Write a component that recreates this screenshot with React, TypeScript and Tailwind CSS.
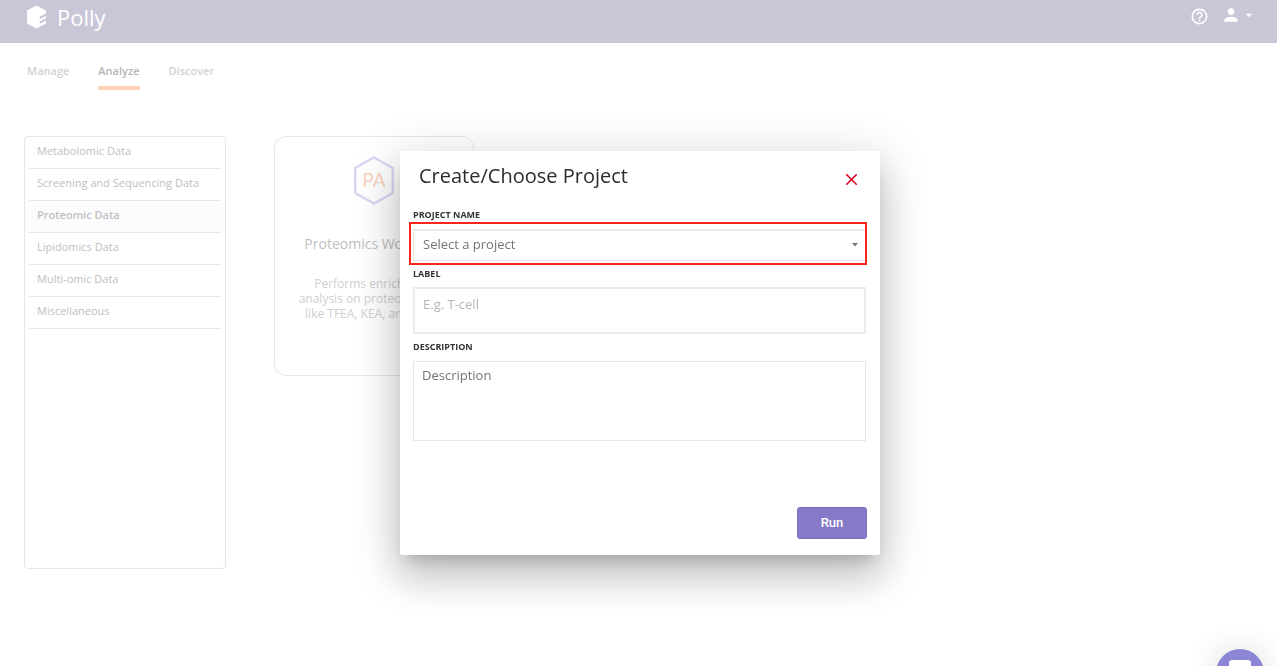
import { X } from 'lucide-react';
import { MdHelpOutline, MdPerson, MdArrowDropDown } from 'react-icons/md';

const tabs = ['Manage', 'Analyze', 'Discover'];

const categories = [
  'Metabolomic Data',
  'Screening and Sequencing Data',
  'Proteomic Data',
  'Lipidomics Data',
  'Multi-omic Data',
  'Miscellaneous',
];

function Logo() {
  return (
    <svg className="h-6 w-5" viewBox="0 0 20 24" aria-hidden="true">
      <path
        d="M9.500 .5 19 5.400V8.400L12.800 11.600V14L19 10.900V13.200L12.800 16.400V18.700L19 15.500V18.600L9.500 23.500 0 18.600V5.400Z"
        fill="#fff"
      />
    </svg>
  );
}

function Header() {
  return (
    <header className="flex h-[43px] items-start justify-between bg-[#c9c6d7] pr-5 pl-[27px] text-white">
      <a href="#home" className="flex items-start gap-2.5 pt-[5px] text-[22px] leading-6 font-medium">
        <Logo />
        Polly
      </a>
      <div className="flex items-start gap-3 pt-[5px]">
        <button type="button" aria-label="Help" className="pt-0.5">
          <MdHelpOutline size={19} />
        </button>
        <button type="button" aria-label="Account" className="flex items-center">
          <MdPerson size={20} />
          <MdArrowDropDown size={16} />
        </button>
      </div>
    </header>
  );
}

function Tabs() {
  return (
    <nav className="flex gap-[29px] px-[27px] pt-5 text-[11px] leading-4 font-semibold">
      {tabs.map((tab) => (
        <a
          key={tab}
          href={`#${tab.toLowerCase()}`}
          className={
            tab === 'Analyze'
              ? 'border-b-4 border-[#fdd0b8] pb-[7px] text-[#b4b4b4]'
              : 'border-b-4 border-transparent pb-[7px] text-[#d2d2d2]'
          }
        >
          {tab}
        </a>
      ))}
    </nav>
  );
}

function Sidebar() {
  return (
    <aside className="min-h-[433px] w-[202px] shrink-0 rounded border border-[#e6e6e6] text-[11px] text-[#c0c0c0]">
      <ul>
        {categories.map((name) => (
          <li key={name} className={name === 'Proteomic Data' ? 'bg-[#fcfcff] px-1 font-semibold' : 'px-1'}>
            <a href="#category" className="flex h-8 items-center border-b border-[#e6e6e6] px-2 pb-0.5">
              {name}
            </a>
          </li>
        ))}
      </ul>
    </aside>
  );
}

function WorkflowCard() {
  return (
    <article className="flex h-60 w-[200px] flex-col items-center rounded-xl border border-[#e6e6e6] px-4 pt-[18px] text-center">
      <svg className="h-[52px] w-11" viewBox="0 0 44 52" aria-hidden="true">
        <path d="M22 2.500 40.800 13V38L22 48.500 3.200 38V13Z" fill="none" stroke="#dbd8f3" strokeWidth="2.500" />
        <text x="22" y="32" textAnchor="middle" fontFamily="Lato" fontSize="19" fill="#fad2bf">
          PA
        </text>
      </svg>
      <h2 className="mt-[27px] text-sm leading-5 whitespace-nowrap text-[#bfbfbf]">Proteomics Workflow</h2>
      <p className="mt-[22px] text-xs leading-[15px] text-[#d0d0d0]">
        Performs enrichment
        <br />
        analysis on proteomic data
        <br />
        like TFEA, KEA, and more
      </p>
    </article>
  );
}

function ProjectDialog() {
  return (
    <div className="fixed inset-0 flex items-start justify-center pt-[151px] pl-[3px]">
      <form
        role="dialog"
        aria-labelledby="dialog-title"
        onSubmit={(event) => event.preventDefault()}
        className="flex min-h-[404px] w-[480px] flex-col rounded-xs bg-white px-[13px] pb-4 text-[#737373] shadow-[0_11px_15px_-7px_rgba(0,0,0,0.2),0_24px_38px_3px_rgba(0,0,0,0.14),0_9px_46px_8px_rgba(0,0,0,0.12)]"
      >
        <div className="flex items-start justify-between pt-[11px] pr-1.5 pl-1.5">
          <h1 id="dialog-title" className="text-xl leading-7 text-[#2c2c2c]">
            Create/Choose Project
          </h1>
          <button type="button" aria-label="Close" className="pt-2 text-[#d8001f]">
            <X size={19} strokeWidth={2} />
          </button>
        </div>

        <label htmlFor="project" className="mt-[19px] text-[9px] leading-3 font-bold text-[#333]">
          PROJECT NAME
        </label>
        <div className="relative mt-2 mr-px">
          <select
            id="project"
            defaultValue=""
            className="h-8 w-full appearance-none border border-t-2 border-[#e8e8e8] bg-white px-[9px] pb-px text-[13px] outline-none"
          >
            <option value="">Select a project</option>
          </select>
          <svg className="pointer-events-none absolute top-3.5 right-2 h-1 w-1.5" viewBox="0 0 6 4" aria-hidden="true">
            <path d="M0 0H6L3 3.500Z" fill="#777" />
          </svg>
          <span className="pointer-events-none absolute -top-[7px] -right-px -bottom-1 -left-1 border-2 border-[#f9251a]" />
        </div>

        <label htmlFor="label" className="mt-[7px] text-[9px] leading-3 font-bold text-[#333]">
          LABEL
        </label>
        <input
          id="label"
          type="text"
          placeholder="E.g. T-cell"
          className="mt-[7px] mr-px h-[47px] border-2 border-[#ececec] px-2 pb-3.5 text-[13px] outline-none placeholder:text-[#b5b5b5]"
        />

        <label htmlFor="description" className="mt-[7px] text-[9px] leading-3 font-bold text-[#333]">
          DESCRIPTION
        </label>
        <textarea
          id="description"
          placeholder="Description"
          className="mt-2 mr-px h-20 resize-none border border-[#e6e6e6] px-2 py-[3px] text-[13px] leading-5 outline-none placeholder:text-[#737373]"
        />

        <button
          type="submit"
          className="mt-auto h-8 w-[70px] self-end rounded-[3px] border border-[#7b6fc4] bg-[#867ac8] font-[Roboto] text-[13px] font-medium text-white"
        >
          Run
        </button>
      </form>
    </div>
  );
}

function ChatLauncher() {
  return (
    <button
      type="button"
      aria-label="Open chat"
      className="fixed right-[13px] -bottom-[31px] flex size-12 justify-center rounded-full bg-[#8b86d6] pt-[11px] shadow-[0_2px_32px_rgba(0,0,0,0.16)]"
    >
      <span className="h-6 w-[22px] rounded-[3px] bg-white" />
    </button>
  );
}

export default function App() {
  return (
    <div className="bg-white font-['Open_Sans',sans-serif]">
      <Header />
      <Tabs />
      <main className="flex items-start gap-12 px-6 pt-[46px]">
        <Sidebar />
        <WorkflowCard />
      </main>
      <ProjectDialog />
      <ChatLauncher />
    </div>
  );
}
